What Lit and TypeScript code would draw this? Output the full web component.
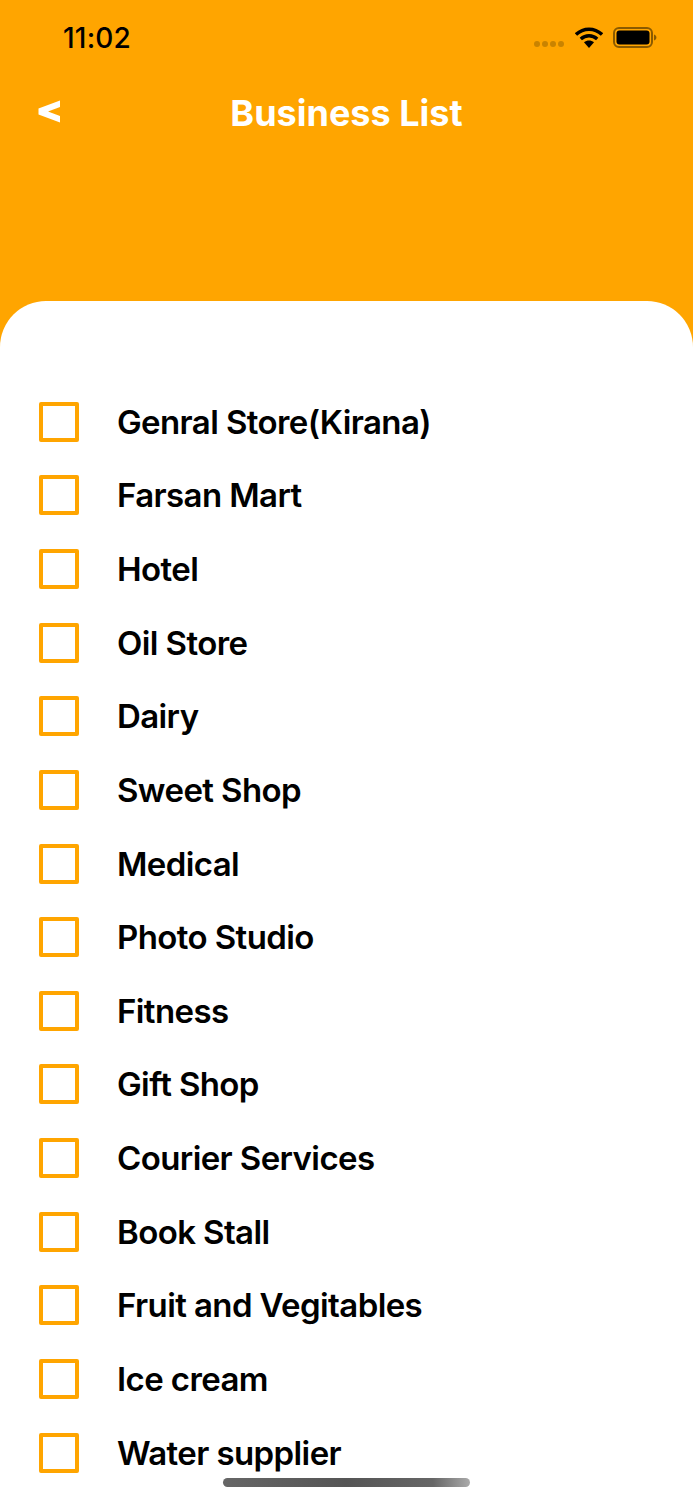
import { LitElement, html, css, svg } from "lit";
import { customElement } from "lit/decorators.js";

const ITEMS = [
  "Genral Store(Kirana)", "Farsan Mart", "Hotel", "Oil Store", "Dairy", "Sweet Shop",
  "Medical", "Photo Studio", "Fitness", "Gift Shop", "Courier Services", "Book Stall",
  "Fruit and Vegitables", "Ice cream", "Water supplier",
];

@customElement("app-root")
export class AppRoot extends LitElement {
  static styles = css`
    :host {
      display: block;
      position: relative;
      width: 693px;
      height: 1500px;
      overflow: hidden;
      background: #ffa500;
      font-family: Inter, "Liberation Sans", sans-serif;
    }
    .status {
      display: flex;
      align-items: center;
      justify-content: space-between;
      height: 76px;
      padding: 0 36px 0 63px;
      box-sizing: border-box;
    }
    .time {
      font-size: 28px;
      font-weight: 500;
      color: #000;
      letter-spacing: 0.2px;
    }
    .indicators {
      display: flex;
      align-items: center;
      gap: 10px;
    }
    .dots { display: flex; gap: 2px; margin-top: 12px; margin-right: 1px; }
    .dot { width: 6px; height: 6px; border-radius: 50%; background: #c98300; }
    .nav {
      display: flex;
      align-items: center;
      justify-content: center;
      position: relative;
      height: 74px;
    }
    .title {
      font-size: 36px;
      font-weight: 700;
      color: #fff;
    }
    .back {
      position: absolute;
      left: 38px;
      top: 24px;
    }
    .sheet {
      margin-top: 151px;
      height: 1199px;
      box-sizing: border-box;
      padding-top: 84px;
      background: #fff;
      border-radius: 46px 46px 0 0;
    }
    .list { display: flex; flex-direction: column; }
    .row {
      display: flex;
      align-items: center;
      gap: 39px;
      height: 73.64px;
      padding-left: 39px;
    }
    .box {
      width: 40px;
      height: 40px;
      box-sizing: border-box;
      border: 4px solid #ffa500;
      border-radius: 2px;
      flex: none;
    }
    .label {
      font-size: 33px;
      font-weight: 570;
      color: #000;
      letter-spacing: -0.6px;
      margin-left: -1px;
    }
    .home {
      position: absolute;
      left: 223px;
      top: 1478px;
      width: 247px;
      height: 9px;
      border-radius: 5px;
      background: linear-gradient(90deg, #666 0%, #555 50%, #666 85%, #aaa 100%);
    }
  `;

  private wifi() {
    return svg`<svg width="28" height="22" viewBox="0 0 28 22">
      <path d="M1 7.5C8.5 .5 19.5 .5 27 7.5" fill="none" stroke="#000" stroke-width="3.4"/>
      <path d="M5.8 12C10.6 7.6 17.4 7.6 22.2 12" fill="none" stroke="#000" stroke-width="3.4"/>
      <path d="M9 15.2C12 13 16 13 19 15.2L14 21Z" fill="#000"/>
    </svg>`;
  }

  private battery() {
    return svg`<svg width="44" height="22" viewBox="0 0 44 22">
      <rect x="1" y="1" width="38" height="19" rx="5" fill="none" stroke="#8a5a00" stroke-width="2"/>
      <rect x="3.5" y="3.5" width="33" height="14" rx="3" fill="#000"/>
      <path d="M41 7.5c1.6.5 2.4 1.6 2.4 3s-.8 2.5-2.4 3Z" fill="#8a5a00"/>
    </svg>`;
  }

  render() {
    return html`
      <div class="status">
        <span class="time">11:02</span>
        <div class="indicators">
          <div class="dots">
            <span class="dot"></span><span class="dot"></span><span class="dot"></span><span class="dot"></span>
          </div>
          ${this.wifi()}
          ${this.battery()}
        </div>
      </div>
      <div class="nav">
        <svg class="back" width="22" height="23" viewBox="0 0 22 23">
          <path d="M22 0.5V7L10 11.5L22 16V22.5L0.5 14.5V8.5Z" fill="#fff"/>
        </svg>
        <span class="title">Business List</span>
      </div>
      <div class="sheet">
        <div class="list">
          ${ITEMS.map(
            (item) => html`<div class="row"><span class="box"></span><span class="label">${item}</span></div>`
          )}
        </div>
      </div>
      <div class="home"></div>
    `;
  }
}
